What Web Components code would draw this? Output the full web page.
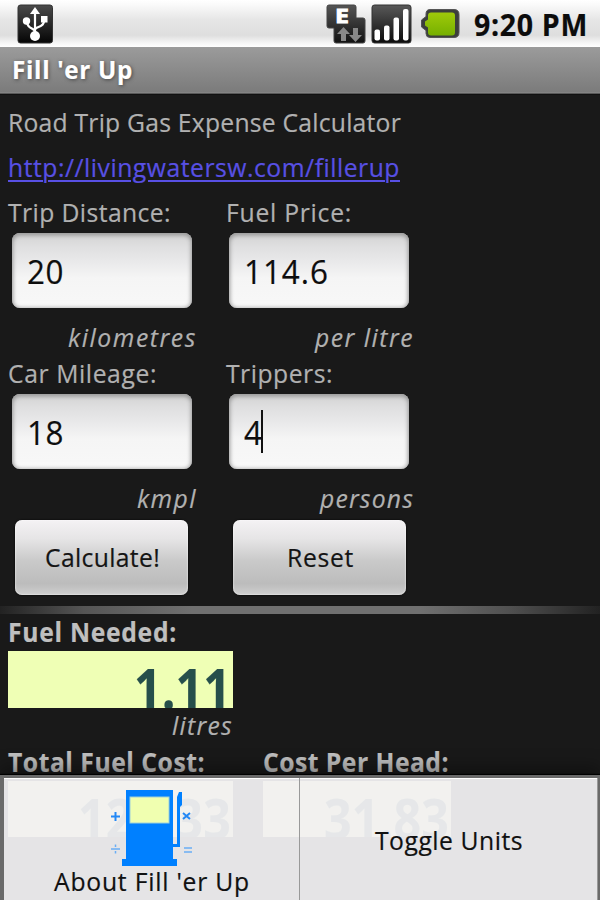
<!DOCTYPE html>
<html lang="en">
<head>
<meta charset="utf-8">
<title>Fill 'er Up</title>
<style>
  html, body {
    margin: 0;
    height: 100%;
    overflow: hidden;
    background: #191919;
  }
</style>
</head>
<body>
<fuel-app></fuel-app>

<script>
  // Line of condensed text tracked out (or in) to a given width
  // attributes: width (px), scale (horizontal, default .95)
  class TextRun extends HTMLElement {
    constructor() {
      super();
      this.attachShadow({ mode: 'open' }).innerHTML = `
        <style>
          :host { display: inline-block; white-space: pre; }
          span {
            display: inline-block;
            transform-origin: left;
            text-decoration: inherit;
          }
        </style>
        <span><slot></slot></span>
      `.replace(/\n\s*/g, '');
    }

    connectedCallback() {
      const width = parseFloat(this.getAttribute('width'));
      const scale = parseFloat(this.getAttribute('scale')) || 0.95;
      const span = this.shadowRoot.querySelector('span');
      const natural = span.getBoundingClientRect().width;
      span.style.letterSpacing = (width / scale - natural) / this.textContent.length + 'px';
      span.style.transform = `scaleX(${scale})`;
      this.style.width = width + 'px';
    }
  }

  class StatusBar extends HTMLElement {
    constructor() {
      super();
      this.attachShadow({ mode: 'open' }).innerHTML = `
        <style>
          :host {
            display: flex;
            align-items: center;
            height: 47px;
            padding: 0 12px 0 17px;
            box-sizing: border-box;
            background: linear-gradient(#fff 0, #fafafa 10%, #e6e6e6 42%, #dedede 75%, #f4f4f4 90%, #fff 100%);
            color: #0c0c0c;
            font-weight: 700;
            font-size: 30px;
            line-height: 47px;
          }
          svg { display: block; flex: none; }
          text-run { padding-top: 2px; }
          .spacer { flex: 1; }
          .net { margin-right: 5px; }
          .signal { margin-right: 8px; }
          .battery { margin-right: 14px; }
        </style>
        <svg width="37" height="40" viewBox="0 0 37 40">
          <defs>
            <linearGradient id="g" x1="0" y1="0" x2="0" y2="1">
              <stop offset="0" stop-color="#4a4a4a"/><stop offset="1" stop-color="#050505"/>
            </linearGradient>
          </defs>
          <rect x="1" y="1" width="34.5" height="38" rx="2.5" fill="url(#g)" stroke="#333"/>
          <g fill="none" stroke="#fff" stroke-width="2.2">
            <path d="M18 8v24M18 28c0-4-8-3-8-10v-2M18 26c0-4 9-2 9-9v-3"/>
          </g>
          <g fill="#fff">
            <path d="M18 3l5 7H13z"/>
            <circle cx="9.500" cy="17" r="3.700"/>
            <rect x="24" y="12" width="6.500" height="6.500"/>
            <circle cx="18" cy="32" r="5"/>
          </g>
        </svg>
        <span class="spacer"></span>
        <svg class="net" width="40" height="40" viewBox="0 0 40 40">
          <defs>
            <linearGradient id="n" x1="0" y1="0" x2="0" y2="1">
              <stop offset="0" stop-color="#555"/><stop offset="1" stop-color="#111"/>
            </linearGradient>
          </defs>
          <path d="M3 1h25q2 0 2 2v11h7q2 0 2 2v21q0 2-2 2H10q-2 0-2-2V24H3q-2 0-2-2V3q0-2 2-2z" fill="url(#n)" stroke="#444"/>
          <text x="9" y="19" font-size="19" font-weight="700" fill="#fff" stroke="#fff" stroke-width=".8" textLength="14" lengthAdjust="spacingAndGlyphs">E</text>
          <path d="M17.500 23l6.500 7h-4v7h-5v-7h-4z" fill="#888"/>
          <path d="M29.500 38l6.500-7h-4v-7h-5v7h-4z" fill="#888"/>
        </svg>
        <svg class="signal" width="41" height="40" viewBox="0 0 41 40">
          <defs>
            <linearGradient id="s" x1="0" y1="0" x2="0" y2="1">
              <stop offset="0" stop-color="#595959"/><stop offset="1" stop-color="#0b0b0b"/>
            </linearGradient>
          </defs>
          <rect x="1" y="1" width="39" height="38" rx="2.500" fill="url(#s)" stroke="#333"/>
          <g fill="#fff">
            <rect x="3.500" y="25.500" width="5.500" height="11" rx="2"/>
            <rect x="13" y="21.500" width="5.500" height="15" rx="2"/>
            <rect x="22.500" y="13.500" width="5.500" height="23" rx="2"/>
            <rect x="32" y="5" width="5.500" height="31.500" rx="2"/>
          </g>
        </svg>
        <svg class="battery" width="40" height="31" viewBox="0 0 40 31">
          <defs>
            <linearGradient id="b" x1="0" y1="0" x2="0" y2="1">
              <stop offset="0" stop-color="#9fca0a"/><stop offset="1" stop-color="#76b000"/>
            </linearGradient>
          </defs>
          <path d="M10 1.500h24q5 0 5 5v18q0 5-5 5H10q-4 0-4-4v-3l-4.500-3.500v-7L6 8.500V6q0-4.500 4-4.500z" fill="#3c3f3c" stroke="#555" stroke-width="1"/>
          <path d="M11 4.500h21q3 0 3 3v17q0 3-3 3H11q-3 0-3-3v-5l-3-2v-4l3-2v-4q0-3 3-3z" fill="url(#b)"/>
        </svg>
        <text-run width="114">9:20 PM</text-run>
      `;
    }
  }

  class TitleBar extends HTMLElement {
    constructor() {
      super();
      this.attachShadow({ mode: 'open' }).innerHTML = `
        <style>
          :host {
            display: block;
            height: 48px;
            padding-left: 12px;
            background: linear-gradient(#9b9b9b, #7b7b7b 94%, #909090 96%, #111 98%);
            color: #fff;
            font-weight: 700;
            font-size: 25.500px;
            line-height: 45px;
            text-shadow: 1px 1px 4px #444;
          }
        </style>
        <slot></slot>
      `;
    }
  }

  // Caption, text box and unit stacked; attributes: value, active
  class FuelField extends HTMLElement {
    constructor() {
      super();
      this.attachShadow({ mode: 'open' }).innerHTML = `
        <style>
          :host {
            display: block;
            width: 188.500px;
            height: 161px;
          }
          .label { line-height: 38px; height: 40px; }
          .box {
            display: flex;
            align-items: center;
            width: 180px;
            height: 75px;
            margin-left: 3.500px;
            padding: 1px 0 0 15px;
            box-sizing: border-box;
            border-radius: 8px;
            background: linear-gradient(#d2d2d2 0, #dfdfe0 18%, #eaeaeb 40%, #f5f5f5 60%, #f7f7f7 90%, #fff);
            box-shadow: inset 0 2px 4px #999, inset 0 0 5px #aaa;
            color: #0d0d0d;
            font-size: 33px;
          }
          .caret {
            width: 2px;
            height: 43px;
            margin: -2px 0 0 -1px;
            background: #111;
          }
          .unit {
            display: flex;
            justify-content: flex-end;
            margin-top: 12px;
            line-height: 35px;
            font-style: italic;
            overflow: hidden;
          }
        </style>
        <div class="label"><slot></slot></div>
        <div class="box"><slot name="value"></slot></div>
        <div class="unit"><slot name="unit"></slot></div>
      `;
    }

    connectedCallback() {
      if (this.hasAttribute('active')) {
        const caret = document.createElement('span');
        caret.className = 'caret';
        this.shadowRoot.querySelector('.box').append(caret);
      }
    }
  }

  class PushButton extends HTMLElement {
    constructor() {
      super();
      this.attachShadow({ mode: 'open' }).innerHTML = `
        <style>
          :host {
            display: flex;
            align-items: center;
            justify-content: center;
            width: 173px;
            height: 75px;
            padding: 0 0 2px 2px;
            box-sizing: border-box;
            border-radius: 7px;
            background: linear-gradient(#f4f2f4 0, #e6e5e6 25%, #c9c9c9 55%, #bcbcbc 85%, #cfcfcf 100%);
            box-shadow: inset 0 0 2px #fff, 0 0 2px #000;
            color: #141414;
          }
        </style>
        <slot></slot>
      `;
    }
  }

  // Bold caption, LCD style readout and unit
  class ResultReadout extends HTMLElement {
    constructor() {
      super();
      this.attachShadow({ mode: 'open' }).innerHTML = `
        <style>
          :host { display: block; height: 129.500px; }
          .label {
            height: 38px;
            line-height: 38px;
            font-weight: 700;
            color: #bfbfbf;
          }
          .lcd {
            display: flex;
            justify-content: flex-end;
            height: 56.500px;
            padding-right: 2px;
            box-sizing: border-box;
            overflow: hidden;
            background: #efffb5;
            color: #264f4b;
            font-weight: 700;
            font-size: 55px;
            line-height: 73px;
          }
          .unit {
            display: flex;
            justify-content: flex-end;
            line-height: 35px;
            font-style: italic;
          }
        </style>
        <div class="label"><slot></slot></div>
        <div class="lcd"><slot name="value"></slot></div>
        <div class="unit"><slot name="unit"></slot></div>
      `;
    }
  }

  class PumpIcon extends HTMLElement {
    constructor() {
      super();
      this.attachShadow({ mode: 'open' }).innerHTML = `
        <style>
          :host { display: block; width: 84px; height: 76px; }
          svg { display: block; overflow: visible; }
        </style>
        <svg width="84" height="78" viewBox="0 0 84 78">
          <path d="M16 1h47v69h4v7H12v-7h4z" fill="#0080ff"/>
          <rect x="20" y="8" width="39" height="26" fill="#f0ffb0" stroke="#9fd0d8" stroke-width="1"/>
          <path d="M69 3h3v13l-2 2v40h-7v-3h4V8z" fill="#0080ff"/>
          <g fill="none" stroke="#2488f5" stroke-width="2">
            <path d="M1 27.500h9M5.500 23v9"/>
            <path d="M73 24l7 6M80 24l-7 6"/>
          </g>
          <g fill="none" stroke="#69adf5" stroke-width="1.500">
            <path d="M1 60h9M5.500 55.500v2.500M5.500 62v2.500"/>
            <path d="M74 59h8M74 63h8"/>
          </g>
        </svg>
      `;
    }
  }

  class OptionsMenu extends HTMLElement {
    constructor() {
      super();
      this.attachShadow({ mode: 'open' }).innerHTML = `
        <style>
          :host {
            display: flex;
            gap: 1px;
            position: absolute;
            left: 0;
            right: 0;
            top: 775px;
            bottom: 0;
            box-sizing: border-box;
            border: solid #6a6a6a;
            border-width: 3px 3px 0 4px;
            color: #101010;
            box-shadow: 0 -1px 1px #000, 0 -8px 16px rgba(0, 0, 0, .35);
          }
        </style>
        <slot></slot>
      `;
    }
  }

  class MenuEntry extends HTMLElement {
    constructor() {
      super();
      this.attachShadow({ mode: 'open' }).innerHTML = `
        <style>
          :host {
            display: flex;
            flex: 1;
            flex-direction: column;
            align-items: center;
            justify-content: center;
            padding-top: 1px;
            line-height: 32px;
            background: rgba(241, 240, 242, .945);
            box-shadow: inset 0 1px #fff, 1px 0 #999;
          }
          :host([with-icon]) {
            justify-content: flex-start;
            padding-top: 11px;
            flex: none;
            width: 295px;
            box-sizing: border-box;
          }
        </style>
        <slot name="icon"></slot>
        <slot></slot>
      `;
    }
  }

  class FuelApp extends HTMLElement {
    constructor() {
      super();
      this.attachShadow({ mode: 'open' }).innerHTML = `
        <style>
          :host {
            display: block;
            position: relative;
            width: 600px;
            height: 900px;
            overflow: hidden;
            background: #191919;
            color: #b1b1b1;
            font: 26px "Open Sans", "Noto Sans", sans-serif;
            -webkit-text-stroke: .2px;
          }
          main { display: block; padding-top: 2px; }
          .intro { padding-left: 8px; line-height: 50px; height: 50px; }
          .link { padding-left: 8px; line-height: 41px; height: 46px; }
          .link text-run {
            color: #5850e4;
            text-decoration: underline;
            text-decoration-thickness: 2px;
            text-underline-offset: 3px;
          }
          .fields {
            display: grid;
            grid-template-columns: 188.500px 188.500px;
            column-gap: 29px;
            padding-left: 8px;
          }
          .buttons {
            display: flex;
            gap: 44.500px;
            padding: 5px 0 0 15px;
          }
          .rule {
            height: 8px;
            margin: 11px 0 -1px;
            background: linear-gradient(90deg, #222, #555 14%, #707070 32%, #707070 70%, #505050 85%, #222);
          }
          .results { padding-left: 8px; }
          .needed { width: 225px; }
          .costs { display: flex; gap: 30px; }
          .total { width: 225px; }
          .head { width: 188px; }
        </style>
        <status-bar></status-bar>
        <title-bar><text-run width="121">Fill 'er Up</text-run></title-bar>
        <main>
          <div class="intro"><text-run width="393">Road Trip Gas Expense Calculator</text-run></div>
          <div class="link"><text-run width="392">http://livingwatersw.com/fillerup</text-run></div>
          <div class="fields">
            <fuel-field>
              <text-run width="163">Trip Distance:</text-run>
              <text-run slot="value" width="37">20</text-run>
              <text-run slot="unit" width="129">kilometres</text-run>
            </fuel-field>
            <fuel-field>
              <text-run width="126">Fuel Price:</text-run>
              <text-run slot="value" width="85">114.6</text-run>
              <text-run slot="unit" width="99">per litre</text-run>
            </fuel-field>
            <fuel-field>
              <text-run width="149">Car Mileage:</text-run>
              <text-run slot="value" width="37">18</text-run>
              <text-run slot="unit" width="60">kmpl</text-run>
            </fuel-field>
            <fuel-field active>
              <text-run width="107">Trippers:</text-run>
              <text-run slot="value" width="18">4</text-run>
              <text-run slot="unit" width="94">persons</text-run>
            </fuel-field>
          </div>
          <div class="buttons">
            <push-button><text-run width="115">Calculate!</text-run></push-button>
            <push-button><text-run width="67">Reset</text-run></push-button>
          </div>
          <div class="rule"></div>
          <div class="results">
            <result-readout class="needed">
              <text-run width="169">Fuel Needed:</text-run>
              <text-run slot="value" width="97" scale=".88">1.11</text-run>
              <text-run slot="unit" width="61">litres</text-run>
            </result-readout>
            <div class="costs">
              <result-readout class="total">
                <text-run width="197">Total Fuel Cost:</text-run>
                <text-run slot="value" width="153" scale=".88">127.33</text-run>
              </result-readout>
              <result-readout class="head">
                <text-run width="186">Cost Per Head:</text-run>
                <text-run slot="value" width="125" scale=".88">31.83</text-run>
              </result-readout>
            </div>
          </div>
        </main>
        <options-menu>
          <menu-entry with-icon>
            <pump-icon slot="icon"></pump-icon>
            <text-run width="196">About Fill 'er Up</text-run>
          </menu-entry>
          <menu-entry><text-run width="148">Toggle Units</text-run></menu-entry>
        </options-menu>
      `;
    }
  }

  customElements.define('fuel-app', FuelApp);
  customElements.define('status-bar', StatusBar);
  customElements.define('title-bar', TitleBar);
  customElements.define('fuel-field', FuelField);
  customElements.define('push-button', PushButton);
  customElements.define('result-readout', ResultReadout);
  customElements.define('pump-icon', PumpIcon);
  customElements.define('options-menu', OptionsMenu);
  customElements.define('menu-entry', MenuEntry);
  customElements.define('text-run', TextRun);
</script>
</body>
</html>
